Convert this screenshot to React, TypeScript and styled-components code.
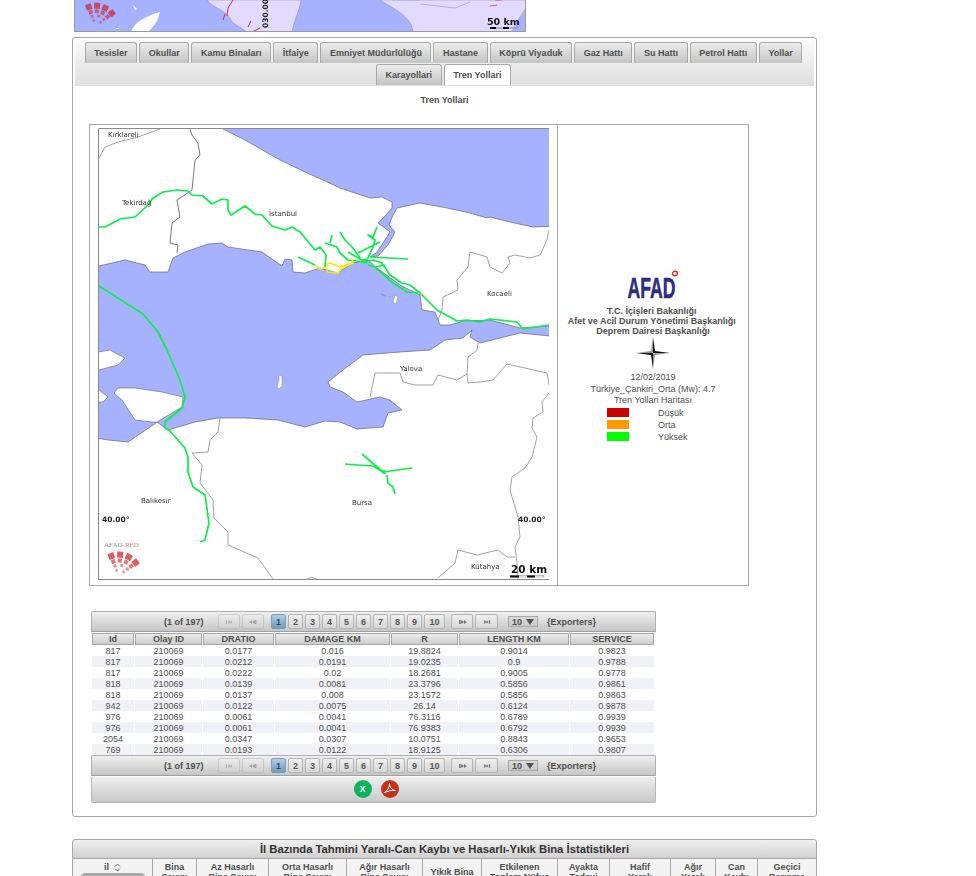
import React from 'react';
import styled, { createGlobalStyle } from 'styled-components';

const Global = createGlobalStyle`
  html, body { margin: 0; padding: 0; height: 876px; overflow: hidden; background: #fff; }
  body { font-family: "Liberation Sans", Arial, sans-serif; color: #4f4f4f; font-size: 9px; }
  #root { width: 976px; }
`;

const TopMap = styled.svg`
  display: block;
  margin-left: 74px;
  width: 452px;
  height: 32px;
  filter: blur(0.3px);
`;
const Panel = styled.section`
  box-sizing: border-box;
  width: 745px;
  height: 780px;
  margin: 5px 0 0 72px;
  padding: 2px;
  border: 1px solid #a8a8a8;
  border-radius: 3px;
`;
const TabBar = styled.nav`
  display: flex;
  flex-wrap: wrap;
  justify-content: center;
  gap: 1px 2px;
  width: 739px;
  padding: 2px 7px 1px 5px;
  box-sizing: border-box;
  background: linear-gradient(#fbfbfb, #dedede);
`;
const Tab = styled.div<{ $active?: boolean }>`
  box-sizing: border-box;
  height: 21px;
  line-height: 20px;
  padding: 0 8.6px;
  font-weight: 700;
  font-size: 9px;
  border: 1px solid #a8a8a8;
  border-bottom: none;
  border-radius: 3px 3px 0 0;
  color: #4f4f4f;
  background: ${p => (p.$active ? '#fff' : 'linear-gradient(#ededed, #c4c4c4)')};
`;
const Heading = styled.h3`
  margin: 9px 0 0;
  height: 10px;
  line-height: 10px;
  text-align: center;
  font-size: 9px;
  font-weight: 700;
`;
const MapFrame = styled.div`
  display: flex;
  box-sizing: border-box;
  width: 660px;
  height: 462px;
  margin: 19px 0 0 14px;
  border: 1px solid #a8a8a8;
`;
const MapCell = styled.div`
  box-sizing: border-box;
  width: 468px;
  padding: 3px 0 0 8px;
  border-right: 1px solid #a8a8a8;
`;
const MapSvg = styled.svg`
  display: block;
  width: 451px;
  height: 452px;
  filter: blur(0.4px);
`;
const LegendCell = styled.div`
  flex: 1;
  display: flex;
  flex-direction: column;
  align-items: center;
  padding-top: 146px;
  box-sizing: border-box;
`;
const LogoSvg = styled.svg`
  display: block;
  width: 56px;
  height: 30px;
  overflow: visible;
`;
const Org = styled.div`
  margin-top: 5px;
  text-align: center;
  font-weight: 700;
  font-size: 9px;
  line-height: 10px;
`;
const Compass = styled.svg`
  display: block;
  width: 34px;
  height: 32px;
  margin-top: 1px;
`;
const Info = styled.div`
  margin-top: 3px;
  text-align: center;
  font-size: 9px;
  line-height: 11.5px;
`;
const LegendRows = styled.div`
  display: flex;
  flex-direction: column;
  gap: 3px;
  width: 100%;
  margin-top: 1px;
  padding-left: 49px;
  box-sizing: border-box;
`;
const LegendRow = styled.div`
  display: flex;
  align-items: center;
  height: 9px;
  font-size: 9px;
`;
const LegendText = styled.span`
  margin-top: 1px;
`;
const Swatch = styled.span<{ $color: string }>`
  width: 22px;
  height: 9px;
  margin-right: 29px;
  background: ${p => p.$color};
`;
const DataBlock = styled.div`
  width: 565px;
  margin: 25px 0 0 16px;
`;
const Paginator = styled.div`
  box-sizing: border-box;
  display: flex;
  align-items: center;
  height: 21px;
  padding-left: 72px;
  background: linear-gradient(#efefef, #c6c6c6);
  border: 1px solid #b0b0b0;
  border-bottom: 1px solid #a0a0a0;
  border-radius: 2px 2px 0 0;
  font-weight: 700;
  font-size: 9px;
`;
const Count = styled.span`
  width: 54px;
`;
const PageButton = styled.span<{ $w?: number; $on?: boolean; $dim?: boolean; $gap?: number }>`
  box-sizing: border-box;
  display: flex;
  align-items: center;
  justify-content: center;
  width: ${p => p.$w ?? 15}px;
  height: 15px;
  margin-right: ${p => p.$gap ?? 2}px;
  border: 1px solid ${p => (p.$on ? '#7b9ab8' : '#b4b4b4')};
  border-radius: 2px;
  background: ${p => (p.$on ? 'linear-gradient(#b3cde3, #6f9bc0)' : 'linear-gradient(#f0f0f0, #d6d6d6)')};
  color: ${p => (p.$on ? '#2f4f6f' : '#555')};
  opacity: ${p => (p.$dim ? 0.5 : 1)};
  font-size: 9px;
`;
const PageSelect = styled.span`
  box-sizing: border-box;
  display: flex;
  align-items: center;
  justify-content: space-between;
  width: 30px;
  height: 11px;
  margin: 0 9px 0 8px;
  padding: 0 3px;
  border: 1px solid #a8a8a8;
  background: linear-gradient(#dcdcdc, #c8c8c8);
  font-size: 9px;
`;
const Grid = styled.div`
  padding-left: 1px;
`;
const Row = styled.div`
  display: grid;
  grid-template-columns: 42px 67px 71px 115px 67px 110px 84px;
  column-gap: 1px;
`;
const HeadRow = styled(Row)`
  margin-top: 1px;
`;
const HeadCell = styled.div`
  box-sizing: border-box;
  height: 12px;
  line-height: 10px;
  text-align: center;
  font-weight: 700;
  font-size: 9px;
  border: 1px solid #a8a8a8;
  background: linear-gradient(#ececec, #cdcdcd);
`;
const Cell = styled.div<{ $odd: boolean }>`
  height: 11px;
  line-height: 13px;
  text-align: center;
  font-size: 9px;
  background: ${p => (p.$odd ? '#f1f2f8' : '#fff')};
`;
const Footer = styled.div`
  box-sizing: border-box;
  display: flex;
  justify-content: center;
  align-items: center;
  gap: 9px;
  height: 26px;
  margin-top: 1px;
  padding: 0 0 2px 5px;
  border: 1px solid #b8b8b8;
  border-top: none;
  border-radius: 0 0 2px 2px;
  background: linear-gradient(#efefef, #c9c9c9);
`;
const RoundIcon = styled.span<{ $color: string }>`
  display: flex;
  align-items: center;
  justify-content: center;
  width: 18px;
  height: 18px;
  border-radius: 50%;
  background: ${p => p.$color};
  color: #fff;
  font-size: 9px;
  font-weight: 700;
`;
const StatsTitle = styled.div`
  box-sizing: border-box;
  width: 745px;
  height: 20px;
  margin: 22px 0 0 72px;
  line-height: 19px;
  text-align: center;
  font-size: 11.25px;
  font-weight: 700;
  color: #333;
  border: 1px solid #a8a8a8;
  border-radius: 3px 3px 0 0;
  background: linear-gradient(#f0f0f0, #d0d0d0);
`;
const StatsHead = styled.div`
  display: grid;
  grid-template-columns: 81px 44px 72px 78px 76px 59px 76px 52px 61px 45px 42px 59px;
  width: 745px;
  margin-left: 72px;
`;
const StatsCell = styled.div`
  box-sizing: border-box;
  display: flex;
  flex-direction: column;
  align-items: center;
  justify-content: center;
  height: 40px;
  padding-bottom: 14px;
  line-height: 10px;
  text-align: center;
  font-size: 9px;
  font-weight: 700;
  border-right: 1px solid #a8a8a8;
  border-bottom: 1px solid #a8a8a8;
  background: #f3f3f3;
  &:first-child { border-left: 1px solid #a8a8a8; }
`;
const StatsFirst = styled(StatsCell)`
  justify-content: flex-start;
  padding: 3px 0 0;
`;
const StatsLabel = styled.span`
  display: flex;
  align-items: center;
  gap: 5px;
  height: 10px;
`;
const FilterBox = styled.span`
  box-sizing: border-box;
  display: block;
  width: 64px;
  height: 14px;
  margin-top: 1px;
  border: 1px solid #b0b0b0;
  border-radius: 3px;
  background: #fff;
  box-shadow: inset 0 2px 2px #999;
`;

const tabsList = ['Tesisler', 'Okullar', 'Kamu Binaları', 'İtfaiye', 'Emniyet Müdürlülüğü', 'Hastane', 'Köprü Viyaduk', 'Gaz Hattı', 'Su Hattı', 'Petrol Hattı', 'Yollar', 'Karayollari', 'Tren Yollari'];
const heads = ['Id', 'Olay ID', 'DRATIO', 'DAMAGE KM', 'R', 'LENGTH KM', 'SERVICE'];
const rows = [
  ['817', '210069', '0.0177', '0.016', '19.8824', '0.9014', '0.9823'],
  ['817', '210069', '0.0212', '0.0191', '19.0235', '0.9', '0.9788'],
  ['817', '210069', '0.0222', '0.02', '18.2681', '0.9005', '0.9778'],
  ['818', '210069', '0.0139', '0.0081', '23.3796', '0.5856', '0.9861'],
  ['818', '210069', '0.0137', '0.008', '23.1572', '0.5856', '0.9863'],
  ['942', '210069', '0.0122', '0.0075', '26.14', '0.6124', '0.9878'],
  ['976', '210069', '0.0061', '0.0041', '76.3116', '0.6789', '0.9939'],
  ['976', '210069', '0.0061', '0.0041', '76.9383', '0.6792', '0.9939'],
  ['2054', '210069', '0.0347', '0.0307', '10.0751', '0.8843', '0.9653'],
  ['769', '210069', '0.0193', '0.0122', '18.9125', '0.6306', '0.9807'],
];
const statsHeads: React.ReactNode[] = [
  <>Bina<br />Sayısı</>, <>Az Hasarlı<br />Bina Sayısı</>, <>Orta Hasarlı<br />Bina Sayısı</>, <>Ağır Hasarlı<br />Bina Sayısı</>, 'Yıkık Bina',
  <>Etkilenen<br />Toplam Nüfus</>, <>Ayakta<br />Tedavi</>, <>Hafif<br />Yaralı</>, <>Ağır<br />Yaralı</>, <>Can<br />Kaybı</>, <>Geçici<br />Barınma</>,
];

const SEA = '#a6b2fd';
const LAND_LINE = '#8a8a8a';
const GREEN = '#0af04a';

const blackSea = 'M223 129 L245 140 L280 160 L305 172 L323 180 L340 188 L355 193 L370 198 L382 197 L392 202 L392 208 L385 216 L378 223 L385 228 L390 232 L385 240 L377 252 L370 257 L378 256 L388 245 L395 232 L389 225 L393 215 L397 208 L420 203 L447 208 L470 213 L487 218 L490 217 L510 222 L533 227 L560 226 L560 110 L223 110 Z';
const marmara = 'M90 266 L99 266 L125 260 L145 265 L150 272 L168 272 L173 258 L185 252 L208 244 L222 243 L228 247 L262 252 L282 266 L285 259 L292 260 L293 272 L305 273 L320 268 L337 273 L353 263 L368 260 L377 268 L400 285 L420 295 L422 310 L435 312 L440 325 L450 325 L463 321 L490 320 L520 328 L560 325 L560 337 L520 333 L480 343 L470 337 L472 330 L463 338 L445 340 L430 350 L400 352 L363 355 L343 370 L328 382 L330 387 L343 392 L357 402 L380 397 L390 400 L402 410 L388 413 L383 427 L357 429 L340 422 L325 421 L305 427 L278 420 L245 418 L218 418 L195 422 L168 430 L157 422 L153 425 L128 442 L108 440 L90 437 Z';
const greys = [
  'M99 158 L105 147 L118 142 L138 137 L160 129',
  'M190 129 L192 135 L198 143 L200 155 L195 160 L192 190 L177 200 L180 217 L172 223 L170 243 L178 245 L177 253',
  'M549 230 L547 240 L540 255 L530 258 L515 255 L508 257 L510 263 L502 273 L490 267 L487 257 L470 252 L468 267 L457 280 L458 290 L443 297 L442 310 L438 320',
  'M370 397 L375 373 L400 373 L403 382 L415 385 L433 385 L438 375 L457 380 L467 374 L468 383 L480 382 L493 380 L507 364 L547 373 L549 385',
  'M467 374 L468 357 L477 350 L478 343',
  'M549 393 L542 402 L543 412 L533 418 L532 428 L537 437 L532 457 L525 468 L512 477 L510 490 L518 517 L520 537 L515 547 L517 563 L518 579',
  'M438 578 L455 563 L458 550 L477 555 L498 550 L507 557 L515 557',
  'M220 418 L218 432 L210 440 L208 452 L192 453 L202 465 L200 483 L213 500 L214 518 L228 532 L228 545 L258 558 L273 579',
  'M307 579 L312 577 L316 579',
];
const greens = [
  'M99 227 L105 227 L120 219 L135 217 L148 205 L153 198 L163 192 L177 190 L188 191 L192 195 L203 196 L212 204 L222 199 L228 200 L228 210 L231 215 L245 206 L255 214 L262 215 L272 226 L285 230 L292 227 L300 232 L315 250 L320 247 L326 255 L325 267',
  'M298 257 L315 265',
  'M325 243 L337 247 L340 253 L348 260 L365 262',
  'M332 235 L330 243',
  'M340 232 L345 240 L353 248 L360 258',
  'M348 252 L365 262',
  'M377 227 L373 237 L368 235 L375 240 L373 247 L367 260',
  'M380 242 L358 253',
  'M370 257 L408 259',
  'M363 262 L373 260 L382 263 L390 275 L402 283 L410 285 L420 293 L437 310 L457 321 L467 320 L480 322 L490 319 L517 322 L523 329 L549 325',
  'M375 267 L393 283 L407 292 L418 293',
  'M368 265 L375 267 L385 265',
  'M99 286 L143 314 L158 332 L167 350 L180 380 L185 397 L182 408 L165 422 L165 428 L170 431 L185 448 L188 457 L188 472 L193 487 L205 495 L209 523 L205 540 L200 542',
  'M345 464 L357 465 L373 466 L383 472 L412 468',
  'M362 454 L383 472',
  'M387 475 L388 483 L393 487 L395 494',
];
const yellows = [
  'M315 265 L320 269 L326 267 L328 272 L338 273 L342 268 L353 263 L352 259',
  'M326 265 L330 263 L340 267 L350 263',
];

const Arrow = ({ d }: { d: string }) => (
  <svg width="9" height="6" viewBox="0 0 9 6"><path d={d} fill="#777" /></svg>
);
const FIRST = 'M1 1h1v4H1zM3 3l2-2v4zM5 3l2-1.500v3z';
const PREV = 'M0 3l3-2v4zM3 3l3-2v4zM6 1h1.500v4H6z';
const NEXT = 'M1 1h1.500v4H1zM3 1l3 2-3 2zM6 1l3 2-3 2z';
const LAST = 'M2 1l2.500 2-2.500 2zM4.500 1.500L7 3 4.500 4.500zM7 1h1v4H7z';

const Pager = () => (
  <Paginator>
    <Count>(1 of 197)</Count>
    <PageButton $w={22} $dim $gap={2}><Arrow d={FIRST} /></PageButton>
    <PageButton $w={22} $dim $gap={7}><Arrow d={PREV} /></PageButton>
    {[1, 2, 3, 4, 5, 6, 7, 8, 9].map(n => (
      <PageButton key={n} $on={n === 1}>{n}</PageButton>
    ))}
    <PageButton $w={21} $gap={6}>10</PageButton>
    <PageButton $w={22} $gap={2}><Arrow d={NEXT} /></PageButton>
    <PageButton $w={23} $gap={2}><Arrow d={LAST} /></PageButton>
    <PageSelect>10<svg width="8" height="6" viewBox="0 0 8 6"><path d="M0 0h8L4 6z" fill="#555" /></svg></PageSelect>
    <span>{'{Exporters}'}</span>
  </Paginator>
);

// AFAD-RED fan: rows of tiles radiating from a tip at the bottom.
const fanTiles: { r: number; a: number; s: number; o: number }[] = [];
[[20, 4, 6.500], [14.500, 4, 4.500], [10, 3, 3.500], [5.500, 2, 3]].forEach(([r, n, s]) => {
  for (let i = 0; i < n; i++) {
    fanTiles.push({ r, a: -20 + (i * 72) / (n - 1), s, o: r > 18 ? 1 : r > 12 ? 0.85 : 0.65 });
  }
});
const Fan = ({ x, y, s, color }: { x: number; y: number; s: number; color: string }) => (
  <g transform={`translate(${x} ${y}) scale(${s})`}>
    {fanTiles.map((t, i) => (
      <rect key={i} x={-t.s / 2} y={-t.r - t.s / 2} width={t.s - 0.6} height={t.s - 0.6} fill={color} opacity={t.o} transform={`rotate(${t.a})`} />
    ))}
  </g>
);

export default function App() {
  return (
    <>
      <Global />
      <TopMap viewBox="74 0 452 32">
        <rect x="74" y="0" width="452" height="32" fill={SEA} />
        <path d="M207 0 C212 8 228 10 232 22 L247 32 L292 32 C294 20 300 10 301 0 Z" fill="#e2dbff" stroke="#8c86b0" strokeWidth=".5" />
        <path d="M380 0 C392 8 412 16 413 32 L512 32 C516 22 522 14 526 8 L526 0 Z" fill="#e2dbff" stroke="#8c86b0" strokeWidth=".5" />
        <path d="M131 32 C134 22 146 16 160 12 C158 22 152 28 148 32 Z" fill="#fff" />
        <path d="M133 5 L137 9 L135 10Z M116 28h3v1h-3z" fill="#fff" />
        <path d="M392 0 L419 0 M420 4 L455 8 L470 2" fill="none" stroke="#9a92b8" strokeWidth=".6" />
        <path d="M233 0 L228 8 L227 16 M225 14 L223 20 M251 21 L248 27 M252 32 L260 28" fill="none" stroke="#d5274e" strokeWidth="1" />
        <path d="M490 6 L497 5 M495 0 L502 0" stroke="#d5274e" strokeWidth=".7" />
        <Fan x={96} y={26} s={1} color="#c34a6a" />
        <text transform="translate(268 28) rotate(-90)" fontFamily="DejaVu Sans" fontWeight="700" fontSize="7.500" fill="#222">030.00</text>
        <text x="487" y="25" fontFamily="DejaVu Sans" fontWeight="700" fontSize="9.500" fill="#111">50 km</text>
        <path d="M490 27.500h27v1h-27z" fill="#fff" stroke="#555" strokeWidth=".4" />
        <path d="M490 27h6v2h-6zM503 27h6v2h-6z" fill="#000" />
        <path d="M74.500 0V31.500H525.500V0" fill="none" stroke="#9a9a9a" />
      </TopMap>
      <Panel>
        <TabBar>
          {tabsList.map(t => <Tab key={t} $active={t === 'Tren Yollari'}>{t}</Tab>)}
        </TabBar>
        <Heading>Tren Yollari</Heading>
        <MapFrame>
          <MapCell>
            <MapSvg viewBox="98 128 451 452">
              <rect x="98" y="128" width="451" height="452" fill="#fff" />
              <path d={blackSea} fill={SEA} stroke="#666" strokeWidth=".7" />
              <path d={marmara} fill={SEA} stroke="#666" strokeWidth=".7" />
              <path d="M122 400 L114 393 L118 388 L135 388 L162 392 L183 397 L182 407 L157 422 L152 422 L135 420 Z" fill="#fff" stroke="#666" strokeWidth=".6" />
              <path d="M98 352 L110 350 L125 358 L118 365 L99 370 L90 370 Z" fill="#fff" stroke="#666" strokeWidth=".6" />
              <path d="M90 390 L99 390 L108 397 L103 402 L90 402 Z" fill="#fff" stroke="#666" strokeWidth=".6" />
              <path d="M279 375 L282 376 L282 386 L279 389 L277 387 L279 380 Z" fill="#fff" stroke="#777" strokeWidth=".4" />
              <path d="M395 295 L398 297 L396 304 L393 302 Z M381 294 L385 296 L383 295 Z M388 295 L390 297 L386 296 Z" fill="#fff" stroke="#777" strokeWidth=".4" />
              {greys.map((d, i) => <path key={i} d={d} fill="none" stroke={i === 1 ? '#555' : LAND_LINE} strokeWidth=".8" />)}
              {greens.map((d, i) => <path key={i} d={d} fill="none" stroke={GREEN} strokeWidth="1.700" strokeLinejoin="round" />)}
              {yellows.map((d, i) => <path key={i} d={d} fill="none" stroke="#f2ee10" strokeWidth="1.700" />)}
              <circle cx="384" cy="472" r="2" fill={GREEN} />
              <circle cx="365" cy="261" r="2.500" fill={GREEN} />
              <g fontFamily="DejaVu Sans" fontSize="7" fill="#333">
                <text x="108" y="137">Kırklareli</text>
                <text x="122" y="205">Tekirdağ</text>
                <text x="269" y="216">İstanbul</text>
                <text x="487" y="296">Kocaeli</text>
                <text x="400" y="371">Yalova</text>
                <text x="352" y="505">Bursa</text>
                <text x="141" y="503">Balıkesir</text>
                <text x="471" y="569">Kütahya</text>
              </g>
              <g fontFamily="DejaVu Sans" fontSize="7.500" fontWeight="700" fill="#222">
                <text x="102" y="522">40.00°</text>
                <text x="518" y="522">40.00°</text>
              </g>
              <text x="104" y="547" fontFamily="Liberation Serif" fontSize="7" fill="#999">AFAD-<tspan fill="#ee7a7a">RED</tspan></text>
              <Fan x={119} y={576} s={1.050} color="#d9605f" />
              <text x="511" y="573" fontFamily="DejaVu Sans" fontWeight="700" fontSize="10.500" fill="#111">20 km</text>
              <path d="M510 575.500h34v1.500h-34z" fill="#fff" stroke="#555" strokeWidth=".4" />
              <path d="M510 575.500h9v2h-9zM527 575.500h8v2h-8z" fill="#000" />
              <path d="M98.500 580V128.500H549M98.500 579.500H549" fill="none" stroke="#8a8a8a" />
            </MapSvg>
          </MapCell>
          <LegendCell>
            <LogoSvg viewBox="0 0 56 30">
              <text x="2.500" y="27" fontFamily="Liberation Sans" fontWeight="700" fontSize="29" fill="#2d2a80" stroke="#2d2a80" strokeWidth=".5" textLength="48" lengthAdjust="spacingAndGlyphs">AFAD</text>
              <circle cx="50" cy="2.500" r="2.300" fill="none" stroke="#d3232a" strokeWidth="1.400" />
            </LogoSvg>
            <Org>T.C. İçişleri Bakanlığı&nbsp;<br />Afet ve Acil Durum Yönetimi Başkanlığı&nbsp;<br />Deprem Dairesi Başkanlığı</Org>
            <Compass viewBox="0 0 34 32">
              <path d="M17 0 L19 14 L17 16 Z M34 16 L19 14 L17 16 Z M17 32 L15 18 L17 16 Z M0 16 L15 18 L17 16 Z" fill="#111" />
              <path d="M17 0 L15 14 L17 16 Z M34 16 L19 18 L17 16 Z M17 32 L19 18 L17 16 Z M0 16 L15 14 L17 16 Z" fill="#999" />
            </Compass>
            <Info>12/02/2019<br />Türkiye_Çankiri_Orta (Mw): 4.7<br />Tren Yollari Haritası</Info>
            <LegendRows>
              <LegendRow><Swatch $color="#cc0000" /><LegendText>Düşük</LegendText></LegendRow>
              <LegendRow><Swatch $color="#ff9900" /><LegendText>Orta</LegendText></LegendRow>
              <LegendRow><Swatch $color="#00ff00" /><LegendText>Yüksek</LegendText></LegendRow>
            </LegendRows>
          </LegendCell>
        </MapFrame>
        <DataBlock>
          <Pager />
          <Grid>
            <HeadRow>{heads.map(h => <HeadCell key={h}>{h}</HeadCell>)}</HeadRow>
            {rows.map((r, i) => (
              <Row key={i}>{r.map((c, j) => <Cell key={j} $odd={i % 2 === 1}>{c}</Cell>)}</Row>
            ))}
          </Grid>
          <Pager />
          <Footer>
            <RoundIcon $color="#0db25c">X</RoundIcon>
            <RoundIcon $color="#c4321e">
              <svg width="14" height="14" viewBox="0 0 14 14"><path d="M1.500 10.500 C4 9.500 6.500 5 6.500 1.500 C6.500 5 9 8.500 12.500 8.500 C9 8 4.500 9 1.500 10.500 Z" fill="none" stroke="#fff" strokeWidth="1" /></svg>
            </RoundIcon>
          </Footer>
        </DataBlock>
      </Panel>
      <StatsTitle>İl Bazında Tahmini Yaralı-Can Kaybı ve Hasarlı-Yıkık Bina İstatistikleri</StatsTitle>
      <StatsHead>
        <StatsFirst>
          <StatsLabel>
            il
            <svg width="7" height="9" viewBox="0 0 7 9"><path d="M1 3.500L3.500 1 6 3.500M1 5.500L3.500 8 6 5.500" fill="none" stroke="#666" strokeWidth="1" /></svg>
          </StatsLabel>
          <FilterBox />
        </StatsFirst>
        {statsHeads.map((h, i) => <StatsCell key={i}><span>{h}</span></StatsCell>)}
      </StatsHead>
    </>
  );
}
